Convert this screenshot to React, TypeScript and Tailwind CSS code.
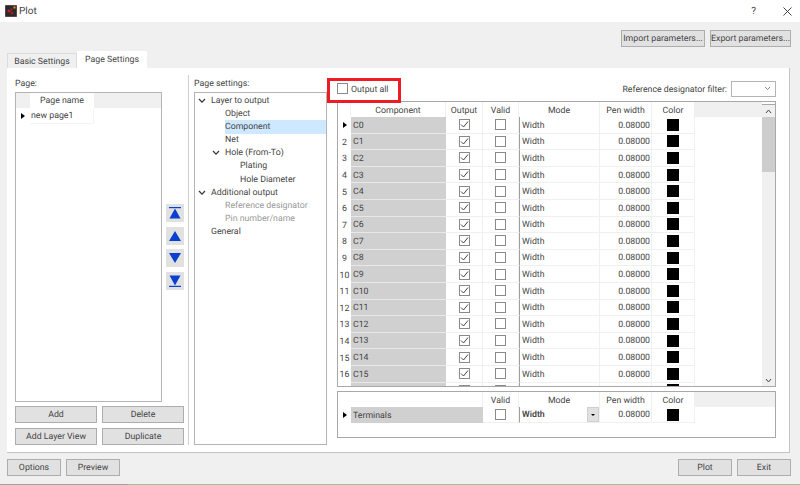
import type { JSX, ReactNode } from 'react';

const rows = ['C0', 'C1', 'C2', 'C3', 'C4', 'C5', 'C6', 'C7', 'C8', 'C9', 'C10', 'C11', 'C12', 'C13', 'C14', 'C15'];

function Btn( { w, children }: { w: string; children: ReactNode } ): JSX.Element {
	return (
		<div className={ `${ w } h-[17px] flex items-center justify-center whitespace-nowrap bg-[#e1e1e1] border border-[#adadad] pt-[3px] text-[8.75px] text-[#444]` }>
			{ children }
		</div>
	);
}

function Check( { on }: { on?: boolean } ): JSX.Element {
	return (
		<div className="w-[11px] h-[11px] border border-[#8a8a8a] bg-white flex items-center justify-center">
			{ on ? (
				<svg width="9" height="9" viewBox="0 0 9 9" fill="none" stroke="#444" strokeWidth="1">
					<path d="M1 4.5 L3.5 7 L8 1.5" />
				</svg>
			) : null }
		</div>
	);
}

function Chevron(): JSX.Element {
	return (
		<svg width="8" height="6" viewBox="0 0 8 6" fill="none" stroke="#333" strokeWidth="1.2">
			<path d="M1 1 L4 4.2 L7 1" />
		</svg>
	);
}

function Marker(): JSX.Element {
	return <div className="w-0 h-0 border-y-[3.5px] border-y-transparent border-l-[4px] border-l-black" />;
}

function TreeRow( { indent, label, open, active, muted }: { indent: string; label: string; open?: boolean; active?: boolean; muted?: boolean } ): JSX.Element {
	return (
		<div className={ `h-[13.2px] flex items-center ${ indent }` }>
			<div className="w-[15px] flex justify-start pl-[2px] shrink-0">{ open ? <Chevron /> : null }</div>
			<div className={ `flex-1 h-full flex items-center pt-[1px] text-[8.75px] ${ active ? 'bg-[#cde8ff]' : '' } ${ muted ? 'text-[#999]' : 'text-[#444]' }` }>{ label }</div>
		</div>
	);
}

function Arrow( { kind }: { kind: 'top' | 'up' | 'down' | 'bottom' } ): JSX.Element {
	return (
		<div className="w-[18px] h-[18px] bg-[#e1e1e1] flex items-center justify-center">
			<svg width="14" height="14" viewBox="0 0 14 14" fill="#0b3fd0">
				{ kind === 'top' ? <><rect x="1" y="1" width="12" height="1.2" /><path d="M7 2.5 L12.5 12.5 H1.5 Z" /></> : null }
				{ kind === 'up' ? <path d="M7 2 L13 12 H1 Z" /> : null }
				{ kind === 'down' ? <path d="M1 2 H13 L7 12 Z" /> : null }
				{ kind === 'bottom' ? <><path d="M1.5 1.5 H12.5 L7 11.5 Z" /><rect x="1" y="11.8" width="12" height="1.2" /></> : null }
			</svg>
		</div>
	);
}

function Head( { w, children }: { w: string; children?: ReactNode } ): JSX.Element {
	return <div className={ `${ w } h-full bg-white border-r border-[#f0f0f0] flex items-center justify-center pt-[4px] text-[8.75px] text-[#444]` }>{ children }</div>;
}

function Swatch(): JSX.Element {
	return <div className="w-[12px] h-[12px] bg-black" />;
}

function DataRow( { index, name }: { index: number; name?: string } ): JSX.Element {
	return (
		<div className="h-[16.6px] flex shrink-0 text-[8.75px] text-[#444]">
			<div className={ `w-[13px] flex items-center justify-center ${ index === 0 ? '' : 'pt-[3px]' }` }>
				{ index === 0 ? <Marker /> : name ? index + 1 : null }
			</div>
			<div className="w-[95px] bg-[#d0d0d0] border-b border-[#e8e8e8] flex items-center pl-[2px] pt-[3px]">{ name }</div>
			<div className="w-[37px] border-b border-r border-[#f0f0f0] flex items-center justify-center"><Check on /></div>
			<div className="w-[36px] border-b border-r border-[#f0f0f0] flex items-center justify-center"><Check /></div>
			<div className="w-[81px] border-l border-l-[#a0a0a0] border-b border-b-[#f0f0f0] border-r border-r-[#f0f0f0] flex items-center pl-[2px] pt-[3px]">{ name ? 'Width' : null }</div>
			<div className="w-[52px] border-b border-r border-[#f0f0f0] flex items-center justify-end pr-[1px] pt-[3px]">{ name ? '0.08000' : null }</div>
			<div className="w-[43px] border-b border-r border-[#f0f0f0] flex items-center justify-center"><Swatch /></div>
		</div>
	);
}

export default function App(): JSX.Element {
	return (
		<div className="relative w-[800px] h-[485px] overflow-hidden flex flex-col bg-[#f0f0f0] text-[#444] [text-rendering:geometricPrecision]" style={ { fontFamily: 'Roboto, Lato, sans-serif' } }>
			{ /* Title bar */ }
			<div className="h-[22px] bg-white flex items-center shrink-0">
				<svg className="ml-[5px]" width="12" height="12" viewBox="0 0 12 12">
					<rect width="12" height="12" fill="#2a2a2a" stroke="#e88" strokeWidth="0.6" />
					<circle cx="4" cy="6" r="1.6" fill="#c62020" />
					<circle cx="7" cy="8" r="1.5" fill="#b01818" />
					<circle cx="6.5" cy="4.5" r="1" fill="#c62020" />
					<rect x="8.5" y="1.5" width="2" height="2" fill="#d8a020" />
				</svg>
				<span className="ml-[2px] text-[10px]">Plot</span>
				<span className="ml-auto mr-[27px] text-[10px]">?</span>
				<svg className="mr-[8px]" width="9" height="9" viewBox="0 0 9 9" stroke="#333" strokeWidth="0.9">
					<path d="M0.5 0.5 L8.5 8.5 M8.5 0.5 L0.5 8.5" />
				</svg>
			</div>

			{ /* Import/export row and tabs */ }
			<div className="h-[46px] relative shrink-0">
				<div className="flex justify-end gap-[5px] pr-[9px] pt-[8px]">
					<Btn w="w-[84px]">Import parameters...</Btn>
					<Btn w="w-[81px]">Export parameters...</Btn>
				</div>
				<div className="absolute left-[7px] bottom-0 flex items-end">
					<div className="w-[70px] h-[15px] bg-[#f0f0f0] border border-b-0 border-[#dcdcdc] flex items-center justify-center pt-[3px] text-[8.75px]">Basic Settings</div>
					<div className="w-[70px] h-[17px] bg-white flex items-center justify-center pt-[3px] text-[8.75px]">Page Settings</div>
				</div>
			</div>

			{ /* Tab panel */ }
			<div className="relative ml-[7px] w-[783px] h-[385px] shrink-0 bg-white border-r border-b border-[#c4c4c4] flex pt-[7px]">
				<div className="ml-[8px] w-[169px] flex flex-col">
					<div className="h-[17px] flex items-center pt-[3px] text-[8.75px]">Page:</div>
					<div className="flex">
						<div className="w-[147px] h-[310px] border border-[#b4b4b4] bg-white">
							<div className="h-[15px] bg-[#f0f0f0] flex">
								<div className="ml-[14px] w-[64px] bg-white flex items-center justify-center pt-[3px] text-[8.75px]">Page name</div>
							</div>
							<div className="h-[16px] flex items-center">
								<div className="w-[14px] flex justify-center"><Marker /></div>
								<div className="w-[64px] h-full flex items-center pl-[1px] pt-[3px] text-[8.75px] border-b border-r border-[#f4f4f4]">new page1</div>
							</div>
						</div>
						<div className="ml-[4px] pt-[112px] flex flex-col gap-[4.5px]">
							<Arrow kind="top" />
							<Arrow kind="up" />
							<Arrow kind="down" />
							<Arrow kind="bottom" />
						</div>
					</div>
					<div className="mt-[4px] grid grid-cols-[82px_82px] gap-x-[5px] gap-y-[5px]">
						<Btn w="w-[82px]">Add</Btn>
						<Btn w="w-[82px]">Delete</Btn>
						<Btn w="w-[82px]">Add Layer View</Btn>
						<Btn w="w-[82px]">Duplicate</Btn>
					</div>
				</div>

				<div className="ml-[4px] w-px h-[370px] bg-[#d0d0d0]" />

				<div className="ml-[5px] w-[133px] flex flex-col">
					<div className="h-[17px] flex items-center pt-[3px] text-[8.75px]">Page settings:</div>
					<div className="h-[353px] border border-[#b4b4b4] pt-[1px] pl-[1px]">
						<TreeRow indent="" label="Layer to output" open />
						<TreeRow indent="pl-[14px]" label="Object" />
						<TreeRow indent="pl-[14px]" label="Component" active />
						<TreeRow indent="pl-[14px]" label="Net" />
						<TreeRow indent="pl-[14px]" label="Hole (From-To)" open />
						<TreeRow indent="pl-[29px]" label="Plating" />
						<TreeRow indent="pl-[29px]" label="Hole Diameter" />
						<TreeRow indent="" label="Additional output" open />
						<TreeRow indent="pl-[14px]" label="Reference designator" muted />
						<TreeRow indent="pl-[14px]" label="Pin number/name" muted />
						<TreeRow indent="" label="General" />
					</div>
				</div>

				<div className="ml-[10px] w-[439px] flex flex-col">
					<div className="h-[26px] flex items-center shrink-0 pt-[1px]">
						<Check />
						<span className="ml-[3px] pt-[4px] text-[8.75px]">Output all</span>
						<span className="ml-auto pt-[4px] text-[8.75px]">Reference designator filter:</span>
						<div className="ml-[4px] w-[45px] h-[16px] bg-white border border-[#b4b4b4] flex items-center justify-end pr-[4px]">
							<svg width="7" height="5" viewBox="0 0 7 5" fill="none" stroke="#666" strokeWidth="0.8"><path d="M1 1 L3.5 3.5 L6 1" /></svg>
						</div>
					</div>

					{ /* Component table */ }
					<div className="relative h-[286px] border border-[#a8a8a8] overflow-hidden flex">
						<div className="w-[424px] flex flex-col">
							<div className="h-[15px] flex shrink-0 bg-[#f0f0f0]">
								<Head w="w-[13px]" />
								<Head w="w-[95px]">Component</Head>
								<Head w="w-[37px]">Output</Head>
								<Head w="w-[36px]">Valid</Head>
								<Head w="w-[81px]">Mode</Head>
								<Head w="w-[52px]">Pen width</Head>
								<Head w="w-[43px]">Color</Head>
							</div>
							{ rows.map( ( name, i ) => <DataRow key={ name } index={ i } name={ name } /> ) }
							<DataRow index={ 16 } />
						</div>
						<div className="w-[13px] bg-[#f0f0f0] flex flex-col">
							<div className="h-[3px] bg-white border-b border-[#a8a8a8]" />
							<div className="h-[12px] flex items-center justify-center">
								<svg width="7" height="5" viewBox="0 0 7 5" fill="none" stroke="#444" strokeWidth="1"><path d="M1 4 L3.5 1 L6 4" /></svg>
							</div>
							<div className="h-[55px] bg-[#cdcdcd]" />
							<div className="flex-1" />
							<div className="h-[12px] flex items-center justify-center">
								<svg width="7" height="5" viewBox="0 0 7 5" fill="none" stroke="#444" strokeWidth="1"><path d="M1 1 L3.5 4 L6 1" /></svg>
							</div>
						</div>
					</div>

					{ /* Terminals table */ }
					<div className="mt-[4px] h-[47px] border border-[#a8a8a8] flex flex-col">
						<div className="h-[15px] flex shrink-0 bg-[#f0f0f0]">
							<Head w="w-[145px]" />
							<Head w="w-[36px]">Valid</Head>
							<Head w="w-[81px]">Mode</Head>
							<Head w="w-[52px]">Pen width</Head>
							<Head w="w-[43px]">Color</Head>
						</div>
						<div className="h-[16px] flex text-[8.75px]">
							<div className="w-[13px] flex items-center justify-center"><Marker /></div>
							<div className="w-[132px] bg-[#d0d0d0] flex items-center pl-[2px] pt-[3px]">Terminals</div>
							<div className="w-[36px] border-b border-r border-[#f0f0f0] flex items-center justify-center"><Check /></div>
							<div className="w-[81px] border-l border-l-[#a0a0a0] border-b border-b-[#f0f0f0] border-r border-r-[#f0f0f0] flex items-center pl-[2px] font-semibold">
								<span className="pt-[3px]">Width</span>
								<div className="ml-auto w-[12px] h-full bg-[#e1e1e1] border border-[#cfcfcf] flex items-center justify-center">
									<div className="w-0 h-0 border-x-[2px] border-x-transparent border-t-[2px] border-t-black" />
								</div>
							</div>
							<div className="w-[52px] border-b border-r border-[#f0f0f0] flex items-center justify-end pr-[1px] pt-[3px]">0.08000</div>
							<div className="w-[43px] border-b border-r border-[#f0f0f0] flex items-center justify-center"><Swatch /></div>
						</div>
					</div>
				</div>

				{ /* Red annotation around "Output all" */ }
				<div className="absolute left-[320px] top-[10px] w-[74px] h-[25px] border-[3px] border-[#ed1c24]" />
			</div>

			{ /* Footer buttons */ }
			<div className="flex pt-[6px] pl-[7px] pr-[9px] gap-[5px]">
				<Btn w="w-[54px]">Options</Btn>
				<Btn w="w-[54px]">Preview</Btn>
				<div className="ml-auto" />
				<Btn w="w-[54px]">Plot</Btn>
				<Btn w="w-[54px]">Exit</Btn>
			</div>
			<div className="mt-auto h-px flex shrink-0">
				<div className="w-[128px] bg-[#a0a0a0]" />
				<div className="flex-1 bg-[#9cc49c]" />
			</div>
		</div>
	);
}
